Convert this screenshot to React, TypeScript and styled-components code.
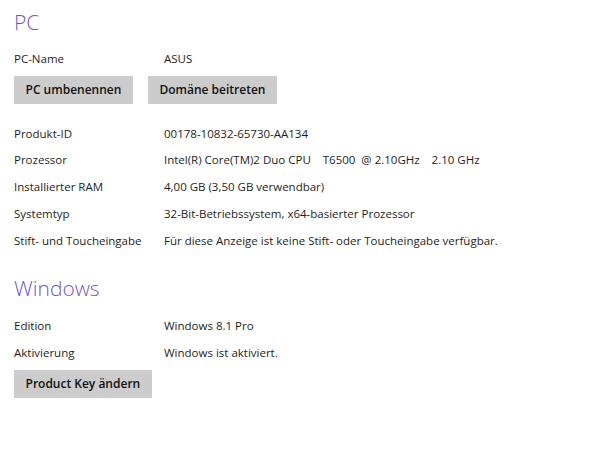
import React from 'react'
import styled, { createGlobalStyle } from 'styled-components'

const Global = createGlobalStyle`
    body {
        margin: 0;
        background: #ffffff;
        font-family: "Open Sans", "Noto Sans", sans-serif;
        color: #1e1e1e;
    }
`

const Page = styled.div`
    width: 590px;
    height: 450px;
    padding: 0 14px;
    box-sizing: border-box;
`

const Heading = styled.h1<{ $top: number; $bottom: number }>`
    margin: 0;
    font-family: "Open Sans", "Noto Sans", sans-serif;
    font-weight: 300;
    font-size: 21px;
    line-height: 34px;
    color: #7356d1;
    padding-top: ${(p) => p.$top}px;
    padding-bottom: ${(p) => p.$bottom}px;
`

const Row = styled.div`
    display: flex;
    font-size: 11.5px;
    line-height: 26.7px;
`

const Label = styled.div`
    width: 150px;
    flex-shrink: 0;
`

const Value = styled.div`
    white-space: pre;
`

const Buttons = styled.div<{ $after: number }>`
    display: flex;
    gap: 15px;
    margin: 3px 0 ${(p) => p.$after}px;
`

const Button = styled.button`
    border: none;
    background: #cccccc;
    font-family: "Open Sans", "Noto Sans", sans-serif;
    font-weight: 600;
    font-size: 12px;
    color: #111;
    height: 28px;
    padding: 0 11.5px;
`

export default function App() {
    return (
        <Page>
            <Global />
            <Heading $top={5} $bottom={7}>PC</Heading>
            <Row><Label>PC-Name</Label><Value>ASUS</Value></Row>
            <Buttons $after={17}>
                <Button>PC umbenennen</Button>
                <Button>Domäne beitreten</Button>
            </Buttons>
            <Row><Label>Produkt-ID</Label><Value>00178-10832-65730-AA134</Value></Row>
            <Row><Label>Prozessor</Label><Value>{'Intel(R) Core(TM)2 Duo CPU    T6500  @ 2.10GHz    2.10 GHz'}</Value></Row>
            <Row><Label>Installierter RAM</Label><Value>4,00 GB (3,50 GB verwendbar)</Value></Row>
            <Row><Label>Systemtyp</Label><Value>32-Bit-Betriebssystem, x64-basierter Prozessor</Value></Row>
            <Row><Label>Stift- und Toucheingabe</Label><Value>Für diese Anzeige ist keine Stift- oder Toucheingabe verfügbar.</Value></Row>
            <Heading $top={17} $bottom={8}>Windows</Heading>
            <Row><Label>Edition</Label><Value>Windows 8.1 Pro</Value></Row>
            <Row><Label>Aktivierung</Label><Value>Windows ist aktiviert.</Value></Row>
            <Buttons $after={0}>
                <Button>Product Key ändern</Button>
            </Buttons>
        </Page>
    )
}
